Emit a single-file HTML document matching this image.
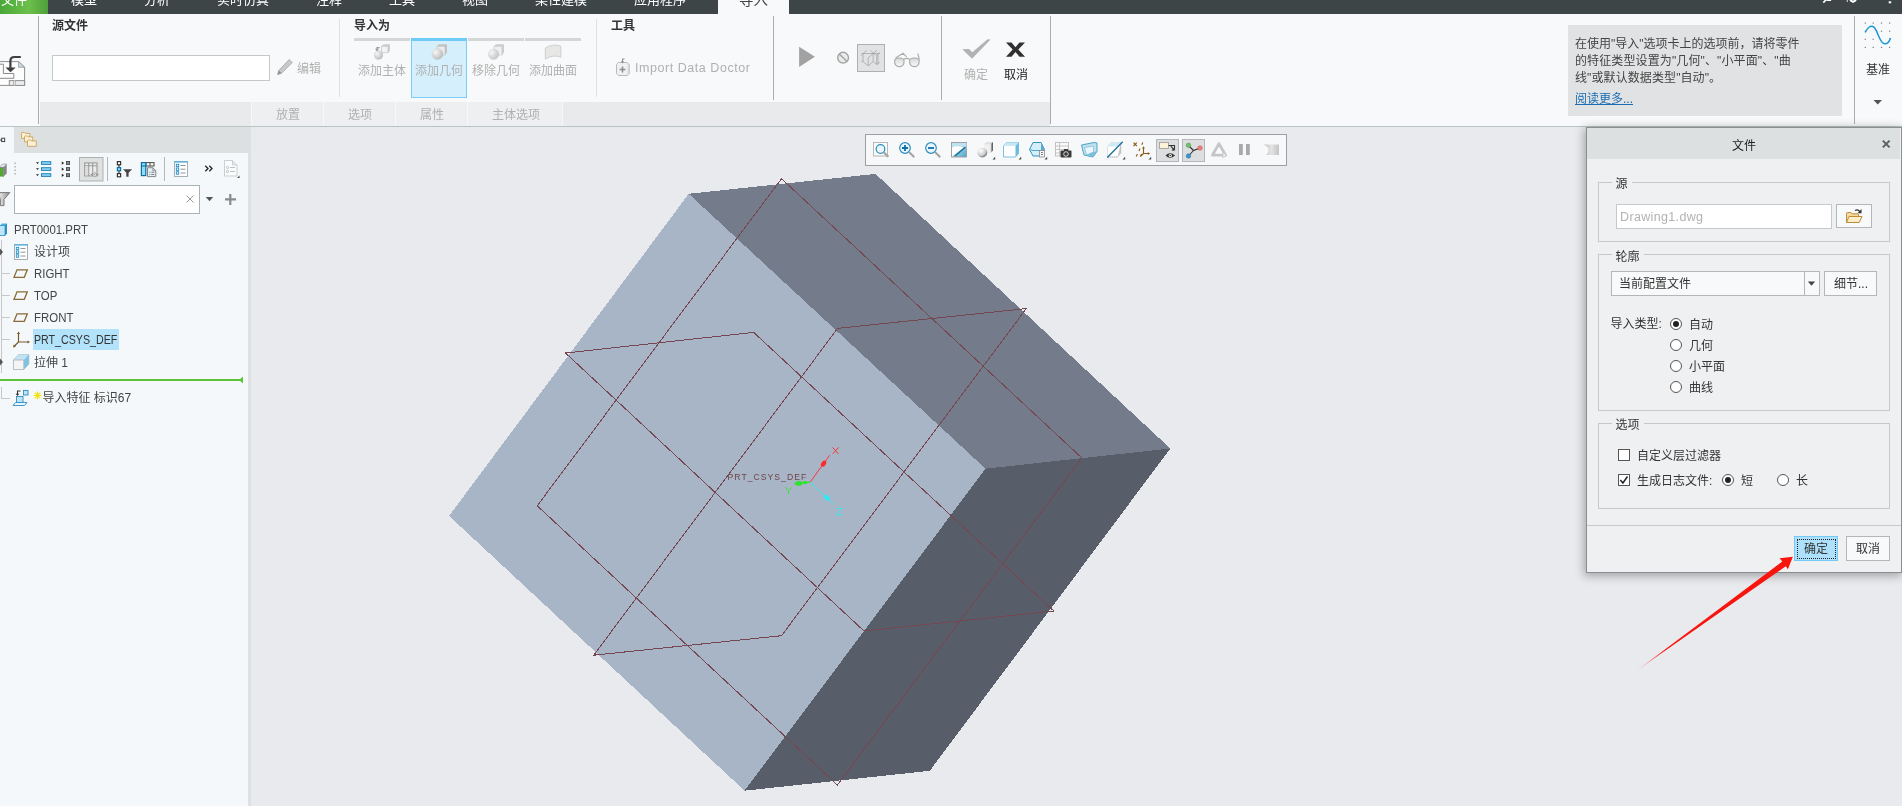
<!DOCTYPE html>
<html lang="zh-CN">
<head>
<meta charset="utf-8">
<title>Creo 导入</title>
<style>
*{box-sizing:border-box;margin:0;padding:0}
html,body{width:1902px;height:806px;overflow:hidden;background:#e9eaee}
body{position:relative;will-change:transform;font-family:"Liberation Sans","Noto Sans CJK SC",sans-serif;font-size:12px;color:#333}
.abs{position:absolute}
.t{position:absolute;white-space:nowrap;line-height:16px;height:16px}
/* top menu bar */
#menubar{left:0;top:0;width:1902px;height:14px;background:#3d4547;overflow:hidden}
#menubar .m{position:absolute;top:-8px;font-size:13px;line-height:16px;color:#fff;white-space:nowrap}
#filetab{left:0;top:0;width:48px;height:14px;background:linear-gradient(90deg,#4aa83a,#6cc04a 60%,#4f9f3c)}
#imptab{left:718px;top:0;width:71px;height:14px;background:#f8f9fa}
/* ribbon */
#ribbon{left:0;top:14px;width:1902px;height:112px;background:#f8f9fa}
.vsep{position:absolute;width:1px;background:#a9adad}
.vsepl{position:absolute;width:1px;background:#dfe1e2}
.gt{font-weight:bold;color:#333}
.dis{color:#b0b0b0}
#tabrow{left:40px;top:102px;width:1010px;height:24px;background:#e9eaec}
#tabrow .c{position:absolute;top:0;height:24px;background:#eeeff1;border-left:1px solid #f6f7f8}
#ribline{left:0;top:126px;width:1902px;height:1px;background:#b8c4c5}
/* left panel */
#lp{left:0;top:127px;width:248px;height:679px;background:#f5f8fa}
#lptabs{left:14px;top:127px;width:237px;height:26px;background:#dce0e1}
#split{left:248px;top:153px;width:3px;height:653px;background:#dde1e2}
.tl{position:absolute;background:#c8c8c8}
.tree{color:#444}
.lat{font-size:12.5px;transform-origin:0 50%;transform:scaleX(.915)}
/* toolbar */
#gtb{left:865px;top:134px;width:422px;height:32px;background:#f7f8f9;border:1px solid #9c9e9f}
.selb{position:absolute;background:#dddee0;border:1px solid #b4b7b9}
/* dialog */
#dlg{left:1586px;top:127px;width:316px;height:446px;background:#eff0f2;border:1px solid #8b8d8e;box-shadow:-1px 2px 9px 1px rgba(0,0,0,.3)}
#dlgtitle{left:1587px;top:128px;width:313px;height:31px;background:#dce0e1}
.grp{position:absolute;border:1px solid #c6c9cb}
.leg{position:absolute;background:#eff0f2;padding:0 4px;line-height:16px;height:16px;color:#333;white-space:nowrap}
.radio{position:absolute;width:12px;height:12px;border-radius:50%;border:1px solid #555;background:#fff}
.radio.on::after{content:"";position:absolute;left:2px;top:2px;width:6px;height:6px;border-radius:50%;background:#222}
.chk{position:absolute;width:12px;height:12px;border:1px solid #555;background:#fff}
.btn{position:absolute;background:#f8f9fa;border:1px solid #b3b7b9;text-align:center;color:#333}
</style>
</head>
<body>
<div id="menubar" class="abs">
<div id="filetab" class="abs"></div>
<div id="imptab" class="abs"></div>
<span class="m" style="left:1px">文件</span>
<span class="m" style="left:71px">模型</span>
<span class="m" style="left:144px">分析</span>
<span class="m" style="left:217px">实时仿真</span>
<span class="m" style="left:316px">注释</span>
<span class="m" style="left:389px">工具</span>
<span class="m" style="left:462px">视图</span>
<span class="m" style="left:535px">柔性建模</span>
<span class="m" style="left:634px">应用程序</span>
<span class="m" style="left:739px;top:-8px;font-size:14.500px;color:#444">导入</span>
<svg class="abs" style="left:1815px;top:0" width="85" height="8" viewBox="1815 0 85 8"><path d="M1823.300 2.600l2.800-3" stroke="#fff" stroke-width="1.600"/><path d="M1825.500 0h5.600v.9h-4z" fill="#fff"/><rect x="1846.800" y="0" width=".9" height="2" fill="#e8eaea"/><path d="M1849.300 0h7.500l-1.200 1.600l-2.500 1.400l-2.600-1.400z" fill="#fff"/><circle cx="1853" cy="0" r="1" fill="#9aa0a1"/><rect x="1888.700" y="1.300" width="2.500" height="2" fill="#fff"/></svg>
</div>
<div id="ribbon" class="abs"></div>
<!-- left import icon -->
<svg class="abs" style="left:0;top:54px" width="28" height="34" viewBox="0 54 28 34">
<path d="M-1 61.600h19.600l6 5.600v18.200H-1z" fill="#fdfdfd" stroke="#8f8f8f" stroke-width="1"/>
<path d="M18.600 61.600v5.600h6z" fill="#c9e1ee" stroke="#8f8f8f" stroke-width=".8"/>
<path d="M-1 64.200h4.400v9.300h10.400v4.800H-1" fill="none" stroke="#8a8a8a" stroke-width="1"/>
<rect x="9.300" y="80.600" width="15.300" height="4.800" fill="#ececec" stroke="#8f8f8f" stroke-width="1"/><path d="M14.500 80.600v4.800" stroke="#fdfdfd" stroke-width="1.600"/><path d="M13.700 80.600v4.800M15.300 80.600v4.800" stroke="#8f8f8f" stroke-width=".7"/>
<path d="M20.800 57h-6.400q-4 0-4 4v7" fill="none" stroke="#404040" stroke-width="2.200"/>
<path d="M5.400 67.400h10.300l-5.200 4.800z" fill="#404040"/>
</svg>
<div class="vsep" style="left:38px;top:16px;height:108px"></div>
<span class="t gt" style="left:52px;top:18px">源文件</span>
<div class="abs" style="left:52px;top:55px;width:218px;height:26px;background:#fff;border:1px solid #c4c9cc"></div>
<svg class="abs" style="left:276px;top:58px" width="18" height="18" viewBox="0 0 18 18"><path d="M13.200 1.500l3 3L5.500 15.200l-3.800 1.300l1-3.900z" fill="#c9c9c9" stroke="#a9a9a9" stroke-width=".9"/><path d="M1.700 16.500l1-3.900l2.800 2.600z" fill="#8e8e8e"/></svg>
<span class="t dis" style="left:297px;top:61px">编辑</span>
<div class="vsepl" style="left:339px;top:19px;height:78px"></div>
<span class="t gt" style="left:354px;top:18px">导入为</span>
<div class="abs" style="left:354px;top:38px;width:56px;height:3px;background:#d4d6d7"></div>
<div class="abs" style="left:468px;top:38px;width:56px;height:3px;background:#d4d6d7"></div>
<div class="abs" style="left:525px;top:38px;width:56px;height:3px;background:#d4d6d7"></div>
<div class="abs" style="left:411px;top:38px;width:56px;height:60px;background:#d5f0fc;border:1px solid #7acdf4;border-top:3px solid #6ecbf5"></div>
<!-- icons for import-as -->
<svg class="abs" style="left:372px;top:43px" width="20" height="18" viewBox="0 0 20 18">
<defs><radialGradient id="sg" cx=".35" cy=".35" r=".75"><stop offset="0" stop-color="#f7f7f7"/><stop offset="1" stop-color="#b5b5b5"/></radialGradient></defs>
<path d="M9.500 3.200l2-2h6.500v6.600l-2 2h-6.500z" fill="#cdcdcd"/><rect x="9.500" y="3.200" width="6.500" height="6.600" fill="#f3f3f3" stroke="#c2c2c2" stroke-width=".6"/>
<circle cx="6.500" cy="12.100" r="4.600" fill="url(#sg)"/>
<path d="M7.600 4.600h-2.600v3" fill="none" stroke="#9a9a9a" stroke-width="1.200"/><path d="M3 5.800l2 2.400l2-2.400z" fill="#9a9a9a"/>
</svg>
<svg class="abs" style="left:429px;top:43px" width="20" height="18" viewBox="0 0 20 18">
<path d="M8 3.200l2-2h8v8l-2 2.800h-8z" fill="#c2c2c2"/><rect x="8" y="3.200" width="8" height="8.800" fill="#ebebeb" stroke="#bdbdbd" stroke-width=".6"/>
<circle cx="8.400" cy="11" r="5.800" fill="url(#sg)"/>
</svg>
<svg class="abs" style="left:486px;top:43px" width="20" height="18" viewBox="0 0 20 18">
<path d="M8 3.200l2-2h8v8l-2 2.800h-8z" fill="#cdcdcd"/><rect x="8" y="3.200" width="8" height="8.800" fill="#f0f0f0" stroke="#c6c6c6" stroke-width=".6"/>
<circle cx="7.500" cy="11.200" r="5.500" fill="url(#sg)" opacity=".85"/>
</svg>
<svg class="abs" style="left:543px;top:43px" width="20" height="18" viewBox="0 0 20 18">
<path d="M2.300 5q8-4.800 15.500-1.800v11q-7.500-3-15.500 1.800z" fill="#e7e8e6" stroke="#c6c6c6" stroke-width=".8"/>
</svg>
<span class="t dis" style="left:358px;top:63px">添加主体</span>
<span class="t dis" style="left:415px;top:63px">添加几何</span>
<span class="t dis" style="left:472px;top:63px">移除几何</span>
<span class="t dis" style="left:529px;top:63px">添加曲面</span>
<div class="vsepl" style="left:596px;top:19px;height:78px"></div>
<span class="t gt" style="left:611px;top:18px">工具</span>
<svg class="abs" style="left:615px;top:58px" width="17" height="18" viewBox="0 0 17 18">
<path d="M1.500 6.500l2-2h9l2 2v9l-2 2h-9l-2-2z" fill="#f1f1f1" stroke="#b9b9b9" stroke-width="1"/>
<path d="M12.500 4.500l2 2v9l-2 2z" fill="#d9d9d9"/>
<path d="M4.500 11.500h6M7.500 8.500v6" stroke="#8f8f8f" stroke-width="1.600"/>
<path d="M9.500 1h-2v3" fill="none" stroke="#8f8f8f" stroke-width="1.100"/><path d="M5.800 3.200l1.700 2.200l1.700-2.200z" fill="#8f8f8f"/>
</svg>
<span class="t dis" style="left:635px;top:60px;font-size:12.500px;letter-spacing:.55px">Import Data Doctor</span>
<div class="vsep" style="left:773px;top:16px;height:84px"></div>
<svg class="abs" style="left:796px;top:40px" width="130" height="36" viewBox="796 40 130 36">
<defs><linearGradient id="lens" x1="0" y1="0" x2="0" y2="1"><stop offset="0" stop-color="#d4d6d4"/><stop offset="1" stop-color="#fbfbfb"/></linearGradient></defs>
<path d="M799.100 46.700v20.200l15.800-10.100z" fill="#a2a2a2"/>
<circle cx="843.100" cy="57.700" r="5.400" fill="#e9eae9" stroke="#a3a3a3" stroke-width="1.400"/><path d="M839.300 54l7.600 7.400" stroke="#a3a3a3" stroke-width="1.400"/>
<rect x="857.500" y="44.500" width="27" height="27" fill="#e1e2e3" stroke="#adb0b1"/>
<g fill="none" stroke="#a0a0a0" stroke-width=".7"><path d="M861.500 53.500h18.500M863 54v7.700M868.200 57.800v8M873.100 53.500v8.200M861.200 61.700l1.800-1.300M863 61.700l5.200 4l5-4M861.200 55.700l5.400-5.500M877 50.200l-8.800 7.600M870.400 50.200l5 5M876.700 54v10.300M878 54v10.300M873.400 61.700l3.500 3l3-2.600M877.500 54.800l2.400-2.300"/></g>
<g fill="url(#lens)" stroke="#a9a9a9" stroke-width="1.100"><path d="M894.600 61q0-3 4.800-3q4.700 0 4.700 3q0 5.600-4.700 5.600q-4.800 0-4.800-5.600zM909.600 61q0-3 4.800-3q4.800 0 4.800 3q0 5.600-4.800 5.600q-4.800 0-4.800-5.600z"/></g>
<g fill="none" stroke="#a9a9a9" stroke-width="1.100"><path d="M904 59q2.800-1.300 5.600 0M895.500 58l7.600-4.700l3.600 3.500M919.300 59.500l-1.500-6"/></g>
</svg>
<div class="vsep" style="left:941px;top:16px;height:84px"></div>
<svg class="abs" style="left:960px;top:38px" width="32" height="22" viewBox="0 0 32 22"><path d="M2.300 11.200L9 11.100L12.300 14.300L27.600 1.300L30.600 1.500L12 20.700Z" fill="#b1b2b1"/></svg>
<span class="t dis" style="left:964px;top:67px">确定</span>
<svg class="abs" style="left:1004px;top:41px" width="23" height="17" viewBox="0 0 23 17"><path d="M2 1.500h5.500l4 4.700l4-4.700H21l-6.700 7l6.700 7.300h-5.500l-4-4.800l-4 4.800H2l6.700-7.300z" fill="#303030"/></svg>
<span class="t" style="left:1004px;top:67px;color:#222">取消</span>
<div class="vsep" style="left:1050px;top:16px;height:108px"></div>
<!-- tab row -->
<div id="tabrow" class="abs">
<div class="c" style="left:211px;width:72px"></div><div class="c" style="left:283px;width:72px"></div><div class="c" style="left:355px;width:72px"></div><div class="c" style="left:427px;width:96px;border-right:1px solid #f6f7f8"></div>
</div>
<span class="t dis" style="left:276px;top:107px">放置</span>
<span class="t dis" style="left:348px;top:107px">选项</span>
<span class="t dis" style="left:420px;top:107px">属性</span>
<span class="t dis" style="left:492px;top:107px">主体选项</span>
<!-- info box -->
<div class="abs" style="left:1568px;top:25px;width:274px;height:91px;background:#e1e2e3"></div>
<span class="t" style="left:1575px;top:36px;color:#444">在使用"导入"选项卡上的选项前，请将零件</span>
<span class="t" style="left:1575px;top:53px;color:#444;letter-spacing:.12px">的特征类型设置为"几何"、"小平面"、"曲</span>
<span class="t" style="left:1575px;top:70px;color:#444;letter-spacing:.1px">线"或默认数据类型"自动"。</span>
<span class="t" style="left:1575px;top:91px;color:#1b6db3;text-decoration:underline">阅读更多...</span>
<div class="vsep" style="left:1854px;top:16px;height:108px"></div>
<svg class="abs" style="left:1862px;top:20px" width="32" height="30" viewBox="0 0 32 30">
<g fill="#7d7d7d"><rect x="2.7" y="2.5" width="1.200" height="1.200"/><rect x="10.6" y="2.5" width="1.200" height="1.200"/><rect x="18.9" y="2.5" width="1.200" height="1.200"/><rect x="27.0" y="2.5" width="1.200" height="1.200"/><rect x="2.7" y="10.6" width="1.200" height="1.200"/><rect x="18.9" y="10.6" width="1.200" height="1.200"/><rect x="27.0" y="10.6" width="1.200" height="1.200"/><rect x="2.7" y="18.7" width="1.200" height="1.200"/><rect x="10.6" y="18.7" width="1.200" height="1.200"/><rect x="27.0" y="18.7" width="1.200" height="1.200"/><rect x="2.7" y="26.8" width="1.200" height="1.200"/><rect x="10.6" y="26.8" width="1.200" height="1.200"/><rect x="18.9" y="26.8" width="1.200" height="1.200"/><rect x="27.0" y="26.8" width="1.200" height="1.200"/></g>
<path d="M3.300 12.500C5.300 7.500 8.500 5.500 10.900 6.500C13.500 7.500 14.800 11.500 16.300 15.200C17.800 19 19.800 23.300 22.600 23.800C25.200 24.200 27.500 21 28.500 17.900" fill="none" stroke="#1c9ad8" stroke-width="1.500"/>
</svg>
<span class="t" style="left:1866px;top:62px;color:#333">基准</span>
<svg class="abs" style="left:1872px;top:98px" width="12" height="8" viewBox="0 0 12 8"><path d="M1.500 2h8.500l-4.250 4.500z" fill="#555"/></svg>
<div id="ribline" class="abs"></div>
<div id="lp" class="abs"></div>
<div id="lptabs" class="abs"></div>
<div class="abs" style="left:0;top:127px;width:14px;height:27px;background:#f5f8fa"></div>
<svg class="abs" style="left:0;top:134px" width="6" height="12" viewBox="0 0 6 12"><path d="M0 6h2" stroke="#444" stroke-width="1"/><rect x="1.700" y="4.200" width="3" height="3.400" fill="none" stroke="#333" stroke-width=".9"/></svg>
<svg class="abs" style="left:20px;top:131px" width="18" height="18" viewBox="0 0 18 18">
<g fill="#fcf1d6" stroke="#d0a259" stroke-width=".9"><path d="M1.500 2.300q0-.8.800-.8h2.200l.8.900h4.500v5H1.500z"/><path d="M4.500 5.800q0-.8.800-.8h2.200l.8.900h4.500v5H4.500z"/><path d="M7.500 9.800q0-.8.800-.8h2.200l.8.900h5v5.400H7.500z"/></g>
</svg>
<div id="split" class="abs"></div>
<!-- panel toolbar -->
<svg class="abs" style="left:0;top:156px" width="248" height="28" viewBox="0 156 248 28">
<path d="M-1 167.500l3.500-3.500h4.200l-3.200 3.500z" fill="#e4e4e4" stroke="#9a9a9a" stroke-width=".7"/><path d="M3.500 167.500l3.200-3.500v9.200l-3.200 3.600z" fill="#858585"/><rect x="-1" y="167.800" width="4" height="8.800" fill="#4eae2c"/><path d="M-1 167.500h4.500v9.300" fill="none" stroke="#7d7d7d" stroke-width=".8"/>
<g fill="#b9b9b9"><rect x="14.300" y="162.500" width="1.600" height="1.600"/><rect x="14.300" y="166" width="1.600" height="1.600"/><rect x="14.300" y="169.500" width="1.600" height="1.600"/><rect x="14.300" y="173" width="1.600" height="1.600"/></g>
<!-- icon1 -->
<g fill="#86d2f2" stroke="#1b7db2" stroke-width=".9"><rect x="41.500" y="161.700" width="9.300" height="2.700"/><rect x="41.500" y="167.700" width="9.300" height="2.700"/><rect x="41.500" y="173.700" width="9.300" height="2.700"/></g>
<g fill="#222"><path d="M36 162.200h3l-1.500 1.800zM36 168.200h3l-1.500 1.800zM36 174.200h3l-1.500 1.800z"/></g>
<!-- icon2 -->
<g fill="#8a8a8a" stroke="#3d3d3d" stroke-width=".8"><rect x="66.400" y="161.500" width="3.200" height="3"/><rect x="66.400" y="167.600" width="3.200" height="3"/><rect x="66.400" y="173.700" width="3.200" height="3"/></g>
<g fill="#222"><path d="M61.800 161.500v3.200l2.300-1.600zM61.800 167.600v3.200l2.300-1.600zM61.800 173.700v3.200l2.300-1.600z"/></g>
<!-- icon3 selected -->
<rect x="79.500" y="157.500" width="23.500" height="23.500" fill="#dfe0e0" stroke="#aeb1b2"/>
<g fill="none" stroke="#9a9a9a" stroke-width="1.100"><rect x="84.700" y="162.900" width="12.300" height="13" fill="#ececec"/><path d="M84.700 165.800h12.300M88.700 162.900v13M92.700 162.900v13"/></g>
<rect x="85.300" y="166.400" width="2.800" height="9" fill="#dcdcdc"/>
<path d="M90 174.600q4.600-5 9.200 0q-4.600 5-9.200 0z" fill="#9a9a9a" stroke="#dfe0e0" stroke-width=".5"/><circle cx="94.600" cy="174.600" r="1.500" fill="#e9e9e9"/><circle cx="94.600" cy="174.600" r=".7" fill="#8a8a8a"/>
<path d="M107.500 157v24M164.500 157v24" stroke="#b5b8b9" stroke-width="1"/>
<!-- icon4 -->
<path d="M119 164.500v3M119 170.800v3" stroke="#333" stroke-width="1.100"/>
<g fill="#fff" stroke="#333" stroke-width="1.200"><rect x="117.400" y="161.600" width="3.200" height="3.200"/><rect x="117.400" y="173.600" width="3.200" height="3.200"/></g><rect x="117.400" y="167.600" width="3.200" height="3.200" fill="#8fdcf8" stroke="#0d6fa3" stroke-width="1.200"/>
<path d="M123.100 169.200h9l-3.500 3.600v3.900h-2.300v-3.900z" fill="#454545"/>
<!-- icon5 -->
<rect x="146" y="162.600" width="8" height="3.400" fill="#fff" stroke="#555" stroke-width="1.100"/><path d="M150 162.600v3.400" stroke="#555" stroke-width="1.100"/>
<rect x="141.400" y="162.600" width="4.400" height="13" fill="#8fdcf8" stroke="#0d6fa3" stroke-width="1.200"/><path d="M141.400 166h4.400" stroke="#0d6fa3" stroke-width="1.100"/>
<path d="M147.500 167.700h5.300l3 3v5.900h-8.300z" fill="#e3f0f6" stroke="#858585" stroke-width="1"/><path d="M152.800 167.700v3h3" fill="none" stroke="#858585" stroke-width=".8"/>
<path d="M149.300 172.300h1M151.300 172.300h3M149.300 174.500h1M151.300 174.500h3" stroke="#777" stroke-width=".9"/>
<!-- icon6 -->
<rect x="174.500" y="161.500" width="13" height="15" fill="#fff" stroke="#9aa7ad" stroke-width=".9"/><path d="M174.500 162h13" stroke="#49b0e6" stroke-width="1.200"/>
<g fill="#fff" stroke="#1d8ec9" stroke-width=".9"><rect x="176.300" y="164.300" width="2.400" height="2.400"/><rect x="176.300" y="168" width="2.400" height="2.400"/><rect x="176.300" y="171.800" width="2.400" height="2.400"/></g>
<path d="M180.500 165.500h5M180.500 169.200h5M180.500 173h5" stroke="#888" stroke-width=".9"/>
<!-- >> -->
<path d="M205.300 165.800l2.700 2.700l-2.700 2.700M209.300 165.800l2.700 2.700l-2.700 2.700" fill="none" stroke="#222" stroke-width="1.300"/>
<!-- icon7 -->
<path d="M224.500 160.500h8l4.500 4.500v11h-12.500z" fill="#fafbfc" stroke="#c3c9cc" stroke-width=".9"/><path d="M232.500 160.500v4.500h4.500" fill="#e3e8ea" stroke="#c3c9cc" stroke-width=".8"/>
<circle cx="227.500" cy="167.500" r="1.100" fill="none" stroke="#a7adb0" stroke-width=".7"/><circle cx="227.500" cy="171.500" r="1.100" fill="none" stroke="#a7adb0" stroke-width=".7"/><path d="M230 167.500h5M230 171.500h5" stroke="#b3b9bc" stroke-width=".9"/>
<path d="M239.500 175.500v2.500h-2.500z" fill="#444"/>
</svg>
<!-- search row -->
<svg class="abs" style="left:0;top:190px" width="12" height="20" viewBox="0 190 12 20"><defs><linearGradient id="fg" x1="0" y1="0" x2="1" y2="0"><stop offset="0" stop-color="#f4f4f4"/><stop offset="1" stop-color="#8d8d8d"/></linearGradient></defs><path d="M-2 192.600h11.800l-5.800 6.800v6.200h-3.600v-6.200z" fill="url(#fg)" stroke="#6e6e6e" stroke-width=".9"/></svg>
<div class="abs" style="left:14px;top:185px;width:186px;height:29px;background:#fff;border:1px solid #a8b3b7"></div>
<svg class="abs" style="left:185px;top:194px" width="10" height="10" viewBox="0 0 10 10"><path d="M1.500 1.500l7 7M8.500 1.500l-7 7" stroke="#9a9a9a" stroke-width="1"/></svg>
<svg class="abs" style="left:204px;top:195px" width="12" height="8" viewBox="0 0 12 8"><path d="M1.800 2h7.400l-3.700 4.300z" fill="#555"/></svg>
<svg class="abs" style="left:224px;top:193px" width="13" height="13" viewBox="0 0 13 13"><path d="M6.300 1v11M1 6.300h11" stroke="#8a8a8a" stroke-width="2.200"/></svg>
<!-- tree -->
<div class="tl" style="left:1px;top:240px;width:1px;height:133px"></div>
<div class="tl" style="left:2px;top:273px;width:8px;height:1px"></div>
<div class="tl" style="left:2px;top:295px;width:8px;height:1px"></div>
<div class="tl" style="left:2px;top:317px;width:8px;height:1px"></div>
<div class="tl" style="left:2px;top:339px;width:8px;height:1px"></div>
<div class="tl" style="left:1px;top:387px;width:1px;height:12px"></div>
<div class="tl" style="left:2px;top:398px;width:8px;height:1px"></div>
<svg class="abs" style="left:0;top:221px" width="8" height="18" viewBox="0 0 8 18"><path d="M0 4.500l2-2h5v10l-2 2H0z" fill="#49b4e8"/><path d="M-1 4.500h6v10h-6z" fill="#bfe6f8" stroke="#2d8fc4" stroke-width=".8"/><path d="M5 4.500l2-2v10l-2 2z" fill="#2d8fc4"/></svg>
<span class="t tree lat" style="left:14px;top:222px">PRT0001.PRT</span>
<svg class="abs" style="left:0;top:247px" width="4" height="10" viewBox="0 0 4 10"><path d="M0 1.500l3 3.500l-3 3.500z" fill="#555"/></svg>
<svg class="abs" style="left:14px;top:244px" width="15" height="17" viewBox="0 0 15 17"><rect x=".5" y=".5" width="13" height="15" fill="#fff" stroke="#9aa7ad" stroke-width=".9"/><path d="M.5 1h13" stroke="#49b0e6" stroke-width="1.200"/><g fill="#fff" stroke="#1d8ec9" stroke-width=".9"><rect x="2.300" y="3.300" width="2.400" height="2.400"/><rect x="2.300" y="7" width="2.400" height="2.400"/><rect x="2.300" y="10.800" width="2.400" height="2.400"/></g><path d="M6.500 4.500h5M6.500 8.200h5M6.500 12h5" stroke="#888" stroke-width=".9"/></svg>
<span class="t tree" style="left:34px;top:244px">设计项</span>
<svg class="abs" style="left:12px;top:268px" width="18" height="11" viewBox="0 0 18 11"><path d="M5 1.800h10.300L12.300 9.300H2z" fill="none" stroke="#8a6a35" stroke-width="1.300"/></svg>
<span class="t tree lat" style="left:34px;top:266px">RIGHT</span>
<svg class="abs" style="left:12px;top:290px" width="18" height="11" viewBox="0 0 18 11"><path d="M5 1.800h10.300L12.300 9.300H2z" fill="none" stroke="#8a6a35" stroke-width="1.300"/></svg>
<span class="t tree lat" style="left:34px;top:288px">TOP</span>
<svg class="abs" style="left:12px;top:312px" width="18" height="11" viewBox="0 0 18 11"><path d="M5 1.800h10.300L12.300 9.300H2z" fill="none" stroke="#8a6a35" stroke-width="1.300"/></svg>
<span class="t tree lat" style="left:34px;top:310px">FRONT</span>
<div class="abs" style="left:33px;top:329px;width:86px;height:21px;background:#b3e3fb"></div>
<svg class="abs" style="left:12px;top:331px" width="19" height="18" viewBox="0 0 19 18"><path d="M6.500 2v9h10M6.500 11l-4.500 4.500" fill="none" stroke="#7a5a28" stroke-width="1.200"/><path d="M6.500 .5l1.600 2.500h-3.200zM18 11l-2.500 1.600v-3.200zM1 16.500l.8-2.900l2.100 2.100z" fill="#7a5a28"/></svg>
<span class="t lat" style="left:34px;top:332px;color:#333;transform:scaleX(.852)">PRT_CSYS_DEF</span>
<svg class="abs" style="left:0;top:357px" width="4" height="10" viewBox="0 0 4 10"><path d="M0 1.500l3 3.500l-3 3.500z" fill="#555"/></svg>
<svg class="abs" style="left:12px;top:353px" width="18" height="18" viewBox="0 0 18 18"><path d="M1.500 7l5-5.500h10.300v9.500l-5 5.500H1.500z" fill="#f4f4f4" stroke="#b0b0b0" stroke-width=".8"/><path d="M1.500 7l5-5.500h10.300l-5 5.500z" fill="#bfe3f3"/><path d="M11.800 7l5-5.500v9.500l-5 5.500z" fill="#7cc3e4"/><path d="M1.500 7h10.300v9.500" fill="none" stroke="#b0b0b0" stroke-width=".8"/></svg>
<span class="t tree" style="left:34px;top:355px">拉伸 1</span>
<div class="abs" style="left:0;top:379px;width:242px;height:2px;background:#5bc43a"></div>
<svg class="abs" style="left:238px;top:376px" width="6" height="8" viewBox="0 0 6 8"><path d="M5 .5v7L1 4z" fill="#5bc43a"/></svg>
<svg class="abs" style="left:12px;top:389px" width="18" height="18" viewBox="0 0 18 18"><rect x="11.500" y="1.500" width="4.500" height="4.500" fill="#bfe3f3" stroke="#2d8fc4" stroke-width=".9"/><rect x="4.500" y="7.500" width="6.500" height="6" fill="#bfe3f3" stroke="#2d8fc4" stroke-width=".9"/><path d="M3.500 13.500h11.500l-2.500 3h-11.500z" fill="#e9f5fb" stroke="#2d8fc4" stroke-width=".9"/><path d="M8.500 2h-3v4" fill="none" stroke="#333" stroke-width="1.100"/><path d="M3.700 4.800l1.800 2.300l1.800-2.300z" fill="#333"/></svg>
<svg class="abs" style="left:33px;top:391px" width="9" height="9" viewBox="0 0 9 9"><path d="M4.500 .5v8M.5 4.500h8M1.700 1.700l5.600 5.600M7.300 1.700l-5.600 5.600" stroke="#f2e200" stroke-width="1.100"/></svg>
<span class="t tree" style="left:42.500px;top:390px">导入特征 标识67</span>
<svg class="abs" style="left:251px;top:127px" width="1651" height="679" viewBox="251 127 1651 679">
<rect x="251" y="127" width="1651" height="679" fill="#e9eaee"/>
<g shape-rendering="crispEdges"><polygon points="688.7,193.8 985.5,468.7 744.6,790.7 449.1,515.9" fill="#a8b5c6"/>
<polygon points="688.7,193.8 875.5,173.9 1170.3,448.5 985.5,468.7" fill="#747b8a"/>
<polygon points="985.5,468.7 1170.3,448.5 929.8,770.8 744.6,790.7" fill="#575e69"/></g>
<g fill="none" stroke="#754750" stroke-width="1" shape-rendering="crispEdges">
<polygon points="781.5,178.7 537.2,505.8 837.3,785 1081.8,457.9"/>
<polygon points="565.5,353 753.7,332.4 1053.8,611 864,631"/>
<polygon points="1026.3,308.6 837.6,328.4 593.7,655.2 781.5,635.7"/>
</g>
<text x="727.5" y="480" font-family="Liberation Sans, sans-serif" font-size="8.6" letter-spacing="1.05" fill="#6e4448">PRT_CSYS_DEF</text>
<g stroke-width="1.1" fill="none">
<line x1="810.2" y1="482.1" x2="829.7" y2="455.2" stroke="#ff2a2a" stroke-width=".9"/>
<ellipse cx="823.6" cy="463.6" rx="3.4" ry="2.2" transform="rotate(-54 823.6 463.6)" fill="#ff2a2a" stroke="none"/>
<path d="M832.6 447.4l6 6.6M838.6 447.4l-6 6.6" stroke="#ff2a2a" stroke-width="0.9"/>
<line x1="810.2" y1="482.1" x2="794.3" y2="483.6" stroke="#2ee22e" stroke-width="1.4"/>
<ellipse cx="798.8" cy="483.4" rx="3.4" ry="2.4" fill="#2ee22e" stroke="none"/>
<ellipse cx="805" cy="482.6" rx="2.6" ry="1.6" fill="#2ee22e" stroke="none"/>
<path d="M785.2 487.2l3.3 3.6l3.3-3.6M788.5 490.8v3.4" stroke="#2ee22e" stroke-width="0.9"/>
<line x1="810.2" y1="482.1" x2="833.8" y2="504.4" stroke="#2fe9f2" stroke-width=".9"/>
<ellipse cx="826.8" cy="497.8" rx="3.4" ry="2.2" transform="rotate(43 826.8 497.8)" fill="#2fe9f2" stroke="none"/>
<path d="M836.2 508.4h5.6l-5.6 6.4h5.8" stroke="#2fe9f2" stroke-width="0.9"/>
</g>
</svg>
<div id="gtb" class="abs"></div>
<div class="selb" style="left:1156px;top:139px;width:23px;height:23px"></div>
<div class="selb" style="left:1182px;top:139px;width:23px;height:23px"></div>
<svg class="abs" style="left:866px;top:135px" width="420" height="30" viewBox="866 135 420 30">
<defs>
<linearGradient id="bl" x1="0" y1="0" x2="1" y2="1"><stop offset="0" stop-color="#e6f5fb"/><stop offset="1" stop-color="#4aa7cc"/></linearGradient>
<radialGradient id="sph" cx=".35" cy=".3" r=".8"><stop offset="0" stop-color="#ffffff"/><stop offset=".6" stop-color="#cfcfcf"/><stop offset="1" stop-color="#555"/></radialGradient>
<linearGradient id="gry" x1="0" y1="0" x2="1" y2="0"><stop offset="0" stop-color="#bdbdbd"/><stop offset=".5" stop-color="#e4e4e4"/><stop offset="1" stop-color="#c4c4c4"/></linearGradient>
</defs>
<!-- 1 zoom window -->
<rect x="873.500" y="142.500" width="14" height="13.500" fill="#fafafa" stroke="#b0b0b0" stroke-width=".9"/>
<circle cx="880.500" cy="149" r="4.300" fill="#eaf6fb" stroke="#2b8fbd" stroke-width="1.200"/><path d="M883.800 152.300l4.500 4.500" stroke="#b5b5b5" stroke-width="2.400"/><path d="M883.800 152.300l4.500 4.500" stroke="#8e8e8e" stroke-width=".8"/>
<!-- 2 zoom in -->
<circle cx="905" cy="148" r="5.300" fill="#eaf6fb" stroke="#2b8fbd" stroke-width="1.200"/><path d="M902 148h6M905 145v6" stroke="#0d6fa3" stroke-width="1.800"/><path d="M909 152l5.200 5.200" stroke="#b5b5b5" stroke-width="2.400"/><path d="M909 152l5.200 5.200" stroke="#8e8e8e" stroke-width=".8"/>
<!-- 3 zoom out -->
<circle cx="931" cy="148" r="5.300" fill="#eaf6fb" stroke="#2b8fbd" stroke-width="1.200"/><path d="M928 148h6" stroke="#0d6fa3" stroke-width="1.800"/><path d="M935 152l5.200 5.200" stroke="#b5b5b5" stroke-width="2.400"/><path d="M935 152l5.200 5.200" stroke="#8e8e8e" stroke-width=".8"/>
<!-- 4 repaint -->
<rect x="951.500" y="142.500" width="15" height="14.500" fill="url(#bl)" stroke="#9a9a9a" stroke-width=".9"/><path d="M952 147q9-3 14.500 1.500v-5.500h-14.500z" fill="#bfe2f0"/><path d="M952 156.500v-9q6-2.500 12 0z" fill="#fdfefe"/><path d="M955 156l10.500-9" stroke="#1b6f95" stroke-width="1.600"/>
<!-- 5 shading sphere+cube -->
<defs><linearGradient id="cs" x1="0" y1="0" x2="1" y2="0"><stop offset="0" stop-color="#d9d9d9"/><stop offset="1" stop-color="#4a4a4a"/></linearGradient></defs>
<path d="M984 144.300l2.600-2.400h6.400v8.600l-2.600 2.400h-6.400z" fill="#e0e0e0"/><path d="M990.400 144.300l2.600-2.400v8.600l-2.600 2.400z" fill="url(#cs)"/><rect x="984" y="144.300" width="6.400" height="8.600" fill="#f1f1f1"/>
<circle cx="982.300" cy="152.600" r="4.900" fill="url(#sph)"/><path d="M995.2 156.800v2.700h-2.700z" fill="#444"/>
<!-- 6 cube white -->
<path d="M1003.500 146l3-3.500h12v11l-3 3.500h-12z" fill="#ffffff" stroke="#6cbbdc" stroke-width=".9"/><path d="M1003.500 146l3-3.500h12l-3 3.500z" fill="#c8e8f4"/><path d="M1015.500 146l3-3.500v11l-3 3.500z" fill="#6cbbdc"/><path d="M1021.2 156.800v2.700h-2.700z" fill="#444"/>
<!-- 7 hex cube with doc -->
<path d="M1029.500 149.500l3.500-7h8l3.500 7l-3.500 6.500h-8z" fill="#d5eef8" stroke="#2b95c6" stroke-width="1"/><path d="M1041 142.500l3.500 7l-3.500 6.500v-7.500z" fill="#5aaad0"/><path d="M1029.500 149.500l3.500 1h8" fill="none" stroke="#2b95c6" stroke-width=".8"/>
<rect x="1039.500" y="150.500" width="5" height="6.500" fill="#f4f4f4" stroke="#8a8a8a" stroke-width=".8"/><path d="M1041 152.500h2M1041 154.500h2" stroke="#666" stroke-width=".8"/><path d="M1047.2 156.800v2.700h-2.700z" fill="#444"/>
<!-- 8 table + camera -->
<g fill="none" stroke="#bdbdbd" stroke-width=".9"><rect x="1055.500" y="142.500" width="13" height="13.500" fill="#fafafa"/><path d="M1055.500 146h13M1055.500 149.500h13M1055.500 153h13M1059.500 142.500v13.500"/></g>
<rect x="1060.500" y="150.500" width="11" height="7" rx="1" fill="#3a3a3a"/><rect x="1064" y="149" width="4" height="2" fill="#3a3a3a"/><circle cx="1066" cy="154" r="2.300" fill="#3a3a3a" stroke="#e5e5e5" stroke-width=".9"/>
<!-- 9 perspective box -->
<path d="M1081.500 145l12.500-2.500l3 .5v8.500l-4 5.500l-9-2z" fill="#bfe0ee" stroke="#4ea3c6" stroke-width="1"/><path d="M1084.500 147.500l9-1.500v6l-7 3z" fill="#e9f6fb" stroke="#7cbfd9" stroke-width=".7"/><path d="M1086.500 155l7-3l3-0.500-3.500 5.500z" fill="#7cbfd9"/>
<!-- 10 section -->
<path d="M1107.500 146.500l3.500-4h10v10.500l-3.500 4h-10z" fill="#fff" stroke="#cfd4d6" stroke-width=".7"/><path d="M1107.500 146.500l3.500-4h10l-3.500 4z" fill="#cfeaf5"/>
<path d="M1121 142.500v10.500l-3.500 4z" fill="#9a9a9a" opacity=".55"/><path d="M1107.500 157h10" stroke="#999" stroke-width=".8" stroke-dasharray="1 1.200"/>
<path d="M1107.300 157.500l15.400-15.800" stroke="#1b6f95" stroke-width="1.300"/><path d="M1125.2 156.800v2.700h-2.700z" fill="#444"/>
<!-- 11 datum display -->
<g stroke="#8a5c14" stroke-width="1.100" fill="none"><path d="M1133.500 142.700l3.300 3.300M1136.800 142.700l-3.300 3.300"/><path d="M1142.800 142.500l-1 2.300M1140 148.500l-1.100 2.400M1137.400 154l-1.200 2.400M1141.600 154l-1.300 2.400"/><path d="M1143.500 147.500v6h5.500M1143.500 153.500l-3 2.800"/></g><path d="M1143.500 146.300l1.400 2.200h-2.800zM1150 153.500l-2.200 1.400v-2.800z" fill="#8a5c14"/><path d="M1151.2 156.800v2.700h-2.700z" fill="#444"/>
<!-- 12 annotation display -->
<rect x="1159.500" y="142.500" width="9" height="6" fill="#fdf4d6" stroke="#9a9a9a" stroke-width=".8"/><path d="M1168.500 145.500h6v4" fill="none" stroke="#333" stroke-width="1.100"/><path d="M1171.500 150.500l3.300 .3l-.3-3.600z" fill="#333"/><path d="M1170.800 146.200l3 3.500" stroke="#333" stroke-width="1.100"/>
<path d="M1165.500 155.500q4.500-4.500 9.500 0q-5 4.500-9.500 0z" fill="#333"/><circle cx="1170.300" cy="155.500" r="1.600" fill="#fff"/><circle cx="1170.300" cy="155.500" r=".8" fill="#333"/>
<!-- 13 spin center -->
<path d="M1188.500 145.500l5 5l6.500-2.500M1193.500 150.500l-5 5.500" stroke="#333" stroke-width="1.100" fill="none"/>
<circle cx="1188.500" cy="145.300" r="2.300" fill="#6fbf6f" stroke="#4a9a4a" stroke-width=".5"/><circle cx="1200" cy="148" r="2.300" fill="#ea7d7d" stroke="#c85a5a" stroke-width=".5"/><circle cx="1188.500" cy="156" r="2.300" fill="#3f95c8" stroke="#2a78a8" stroke-width=".5"/>
<!-- 14 triangle grey -->
<path d="M1219 143.800l6.600 11.400h-13.200z" fill="#fbfbfb" stroke="#c6c6c6" stroke-width="2.800" stroke-linejoin="round"/><path d="M1222.800 152.600v5l4.200-2.500z" fill="#ececec" stroke="#c0c0c0" stroke-width=".7"/>
<!-- 15 pause -->
<rect x="1239" y="144" width="3.800" height="11" fill="#a9a9a9"/><rect x="1246" y="144" width="3.800" height="11" fill="#a9a9a9"/>
<!-- 16 grey shape -->
<path d="M1263.500 144.500h15.500v10.500h-13.500q3-1.500 3-5q0-3.500-5-5.500z" fill="url(#gry)"/>
</svg>
<div id="dlg" class="abs"></div>
<div id="dlgtitle" class="abs"></div>
<span class="t" style="left:1732px;top:138px;color:#222">文件</span>
<svg class="abs" style="left:1881px;top:139px" width="11" height="10" viewBox="0 0 11 10"><path d="M1.800 1.600l6.800 6.800M8.600 1.600l-6.800 6.800" stroke="#5f6163" stroke-width="2"/></svg>
<div class="grp" style="left:1598px;top:182px;width:292px;height:60px"></div>
<span class="leg" style="left:1611.500px;top:176px">源</span>
<div class="abs" style="left:1616px;top:204px;width:216px;height:25px;background:#fff;border:1px solid #c7cacc"></div>
<span class="t" style="left:1620px;top:208.500px;color:#b2b2b2;font-size:12.500px;letter-spacing:.35px">Drawing1.dwg</span>
<div class="btn" style="left:1836px;top:204px;width:36px;height:24px"></div>
<svg class="abs" style="left:1844px;top:207px" width="20" height="18" viewBox="0 0 20 18"><path d="M2.500 15.500v-9q0-1 1-1h3.500l1 1.300h5.500q1 0 1 1v1.700" fill="#f3d9a0" stroke="#b98d3a" stroke-width="1"/><path d="M2.500 15.500l2.500-6h13l-2.800 6z" fill="#fbeec9" stroke="#b98d3a" stroke-width="1"/><path d="M11 3.500q3-1.500 5 1.300" fill="none" stroke="#333" stroke-width="1.200"/><path d="M17.500 2v4.200h-4z" fill="#333"/></svg>
<div class="grp" style="left:1598px;top:254px;width:292px;height:157px"></div>
<span class="leg" style="left:1611.500px;top:249px">轮廓</span>
<div class="abs" style="left:1611px;top:271px;width:209px;height:25px;background:#f8f9fa;border:1px solid #b3b7b9"></div>
<div class="abs" style="left:1804px;top:272px;width:1px;height:23px;background:#b3b7b9"></div>
<svg class="abs" style="left:1806px;top:280px" width="12" height="8" viewBox="0 0 12 8"><path d="M1.800 1.500h7.400l-3.700 4.300z" fill="#444"/></svg>
<span class="t" style="left:1619px;top:275.500px;color:#333">当前配置文件</span>
<div class="btn" style="left:1824px;top:271px;width:53px;height:25px"></div>
<span class="t" style="left:1834px;top:275.500px;color:#333">细节...</span>
<span class="t" style="left:1610.500px;top:316px;color:#333">导入类型:</span>
<div class="radio on" style="left:1670px;top:318px"></div><span class="t" style="left:1689px;top:316.500px;color:#333">自动</span>
<div class="radio" style="left:1670px;top:339px"></div><span class="t" style="left:1689px;top:337.500px;color:#333">几何</span>
<div class="radio" style="left:1670px;top:360px"></div><span class="t" style="left:1689px;top:358.500px;color:#333">小平面</span>
<div class="radio" style="left:1670px;top:381px"></div><span class="t" style="left:1689px;top:379.500px;color:#333">曲线</span>
<div class="grp" style="left:1598px;top:423px;width:292px;height:86px"></div>
<span class="leg" style="left:1611.500px;top:417px">选项</span>
<div class="chk" style="left:1618px;top:449px"></div><span class="t" style="left:1637px;top:448px;color:#333">自定义层过滤器</span>
<div class="chk" style="left:1618px;top:474px"></div>
<svg class="abs" style="left:1618px;top:474px" width="12" height="12" viewBox="0 0 12 12"><path d="M2.300 6l2.600 3l4.600-6.500" fill="none" stroke="#222" stroke-width="1.500"/></svg>
<span class="t" style="left:1637px;top:472.500px;color:#333">生成日志文件:</span>
<div class="radio on" style="left:1722px;top:474px"></div><span class="t" style="left:1741px;top:472.500px;color:#333">短</span>
<div class="radio" style="left:1777px;top:474px"></div><span class="t" style="left:1796px;top:472.500px;color:#333">长</span>
<div class="abs" style="left:1587px;top:525px;width:314px;height:1px;background:#c6c9cb"></div>
<div class="abs" style="left:1794px;top:536px;width:44px;height:25px;background:#ade1fb;border:1px solid #74caf5"></div>
<div class="abs" style="left:1796.500px;top:538.500px;width:39px;height:20px;border:1px dotted #222"></div>
<span class="t" style="left:1804px;top:540.500px;color:#333">确定</span>
<div class="btn" style="left:1846px;top:536px;width:44px;height:25px"></div>
<span class="t" style="left:1856px;top:540.500px;color:#333">取消</span>
<svg class="abs" style="left:1620px;top:540px" width="190" height="140" viewBox="1620 540 190 140">
<defs><linearGradient id="ag" gradientUnits="userSpaceOnUse" x1="1635" y1="672" x2="1665" y2="650"><stop offset="0" stop-color="#f8150e" stop-opacity=".15"/><stop offset="1" stop-color="#f8150e"/></linearGradient></defs>
<path d="M1635.500 671.600L1782.300 561.400L1779.600 558.300L1792.900 556.700L1787.900 569.300L1785.800 566.200Z" fill="url(#ag)"/>
</svg>
</body>
</html>
